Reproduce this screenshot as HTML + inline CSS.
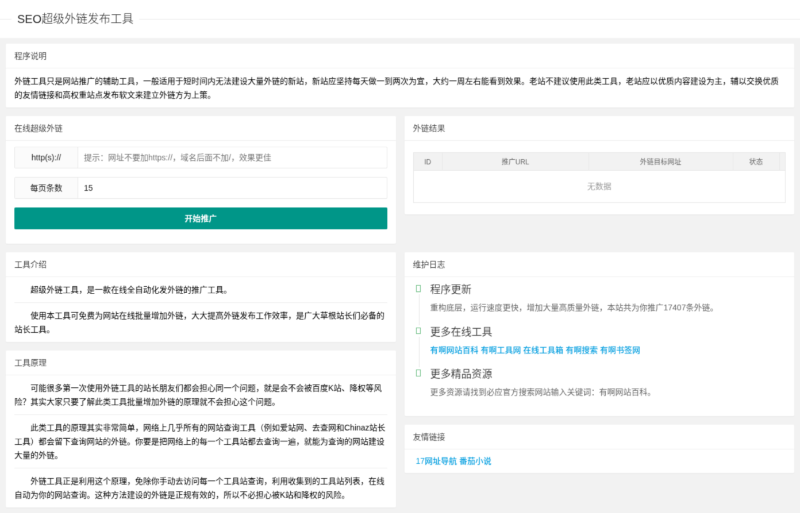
<!DOCTYPE html>
<html lang="zh-CN">
<head>
<meta charset="utf-8">
<title>SEO超级外链发布工具</title>
<style>
*{margin:0;padding:0}
html,body{width:800px;height:513px;overflow:hidden;background:#f2f2f2}
body{font-family:"Liberation Sans","Noto Sans CJK SC",sans-serif;font-size:14px;line-height:24px;color:#333;font-weight:400}
#wrap{position:absolute;left:0;top:0;width:1392px;height:894px;transform:scale(0.574713);transform-origin:0 0;will-change:transform;background:#f2f2f2;overflow:hidden}
.top{position:relative;width:1392px;height:66px;background:#fff}
.top .line{position:absolute;left:0;top:33px;width:1392px;height:1px;background:#e8e8e8}
.top .legend{position:absolute;left:20px;top:19px;height:28px;line-height:28px;padding:0 10px;background:#fff;font-size:20px;font-weight:300;color:#222}
.fluid{padding:10px 10px 0 10px}
.row{display:flex;justify-content:space-between;align-items:flex-start}
.col{width:678.5px}
.card{background:#fff;border-radius:2px;box-shadow:0 1px 2px 0 rgba(0,0,0,.05);margin-bottom:15px}
.hd{height:42px;line-height:42px;padding:0 15px;border-bottom:1px solid #eee;color:#333;font-size:14px;font-weight:350}
.bd{padding:10px 15px;line-height:24px;color:#000}
.fi{position:relative;height:36px;margin-bottom:15px;border:1px solid #e6e6e6;border-radius:2px;display:flex}
.fi .lb{width:109px;height:36px;line-height:36px;text-align:center;background:#fbfbfb;border-right:1px solid #e6e6e6;color:#222}
.fi .in{flex:1;height:36px;line-height:36px;padding-left:10px;color:#222}
.fi .ph{color:#757575}
.btn{height:38px;line-height:38px;background:#009688;color:#fff;text-align:center;border-radius:2px;font-weight:bold;margin-bottom:15px}
.tbl{margin:10px 0;border:1px solid #e6e6e6;height:86px;position:relative;color:#666}
.tbl .th{position:absolute;left:0;top:0;right:0;height:30px;background:#f2f2f2;border-bottom:1px solid #e6e6e6}
.tbl .c{position:absolute;top:0;height:30px;line-height:32px;text-align:center;border-right:1px solid #e6e6e6;font-size:12px}
.tbl .none{position:absolute;left:0;right:0;top:31px;height:55px;line-height:55px;text-align:center;color:#999;font-size:14px}
p.t{text-indent:2em;padding-bottom:10px;margin-bottom:10px;border-bottom:1px solid #ececec}
p.t.last{padding-bottom:0;margin-bottom:0;border-bottom:0}
.tl{padding-left:5px;line-height:22px}
.tli{position:relative;padding-bottom:19.5px}
.tli:before{content:"";position:absolute;left:5px;top:0;width:1px;height:100%;background:#e2e2e2}
.tli.last:before{display:none}
.ax{position:absolute;left:-5px;top:0;width:20px;height:20px;background:#fff}
.ax i{position:absolute;left:5px;top:4px;width:6.5px;height:9.5px;border:1.75px solid #5fb878;display:block}
.tc{padding-left:25px}
.tc h3{position:relative;top:1px;font-size:18px;font-weight:350;line-height:22px;margin-bottom:10px;color:#333}
.tc div{line-height:22px;color:#666}
a{color:#059fe0;text-decoration:none;font-weight:500}
</style>
</head>
<body>
<div id="wrap"><svg width="0" height="0" style="position:absolute"><filter id="pf" x="0" y="0" width="100%" height="100%" color-interpolation-filters="sRGB"><feConvolveMatrix order="3" kernelMatrix="0.0400 0.1200 0.0400 0.1200 0.3600 0.1200 0.0400 0.1200 0.0400" edgeMode="duplicate"/></filter></svg><div id="inner" style="filter:url(#pf);background:#f2f2f2;width:1392px;height:894px">
  <div class="top"><div class="line"></div><div class="legend">SEO超级外链发布工具</div></div>
  <div class="fluid">
    <div class="card">
      <div class="hd">程序说明</div>
      <div class="bd">外链工具只是网站推广的辅助工具，一般适用于短时间内无法建设大量外链的新站，新站应坚持每天做一到两次为宜，大约一周左右能看到效果。老站不建议使用此类工具，老站应以优质内容建设为主，辅以交换优质<br>的友情链接和高权重站点发布软文来建立外链方为上策。</div>
    </div>

    <div class="row">
      <div class="col">
        <div class="card">
          <div class="hd">在线超级外链</div>
          <div class="bd">
            <div class="fi"><div class="lb">http(s)://</div><div class="in ph">提示：网址不要加https://，域名后面不加/，效果更佳</div></div>
            <div class="fi"><div class="lb">每页条数</div><div class="in">15</div></div>
            <div class="btn">开始推广</div>
          </div>
        </div>
      </div>
      <div class="col">
        <div class="card">
          <div class="hd">外链结果</div>
          <div class="bd">
            <div class="tbl">
              <div class="th"></div>
              <div class="c" style="left:0;width:49.5px">ID</div>
              <div class="c" style="left:50.5px;width:253.5px">推广URL</div>
              <div class="c" style="left:305px;width:250px">外链目标网址</div>
              <div class="c" style="left:556px;width:80px">状态</div>
              <div class="none">无数据</div>
            </div>
          </div>
        </div>
      </div>
    </div>

    <div class="row">
      <div class="col">
        <div class="card">
          <div class="hd">工具介绍</div>
          <div class="bd">
            <p class="t">超级外链工具，是一款在线全自动化发外链的推广工具。</p>
            <p class="t last">使用本工具可免费为网站在线批量增加外链，大大提高外链发布工作效率，是广大草根站长们必备的<br>站长工具。</p>
          </div>
        </div>
        <div class="card">
          <div class="hd">工具原理</div>
          <div class="bd">
            <p class="t">可能很多第一次使用外链工具的站长朋友们都会担心同一个问题，就是会不会被百度K站、降权等风<br>险？其实大家只要了解此类工具批量增加外链的原理就不会担心这个问题。</p>
            <p class="t">此类工具的原理其实非常简单，网络上几乎所有的网站查询工具（例如爱站网、去查网和Chinaz站长<br>工具）都会留下查询网站的外链。你要是把网络上的每一个工具站都去查询一遍，就能为查询的网站建设<br>大量的外链。</p>
            <p class="t last">外链工具正是利用这个原理，免除你手动去访问每一个工具站查询，利用收集到的工具站列表，在线<br>自动为你的网站查询。这种方法建设的外链是正规有效的，所以不必担心被K站和降权的风险。</p>
          </div>
        </div>
      </div>
      <div class="col">
        <div class="card">
          <div class="hd">维护日志</div>
          <div class="bd" style="padding-bottom:11px">
            <div class="tl">
              <div class="tli"><div class="ax"><i></i></div><div class="tc"><h3>程序更新</h3><div>重构底层，运行速度更快，增加大量高质量外链，本站共为你推广17407条外链。</div></div></div>
              <div class="tli"><div class="ax"><i></i></div><div class="tc"><h3>更多在线工具</h3><div><a>有啊网站百科</a> <a>有啊工具网</a> <a>在线工具箱</a> <a>有啊搜索</a> <a>有啊书签网</a></div></div></div>
              <div class="tli last"><div class="ax"><i></i></div><div class="tc"><h3>更多精品资源</h3><div>更多资源请找到必应官方搜索网站输入关键词：有啊网站百科。</div></div></div>
            </div>
          </div>
        </div>
        <div class="card">
          <div class="hd">友情链接</div>
          <div class="bd" style="padding-left:20px;line-height:21px"><a>17网址导航</a> <a>番茄小说</a></div>
        </div>
      </div>
    </div>
  </div>
</div></div>
</body>
</html>
